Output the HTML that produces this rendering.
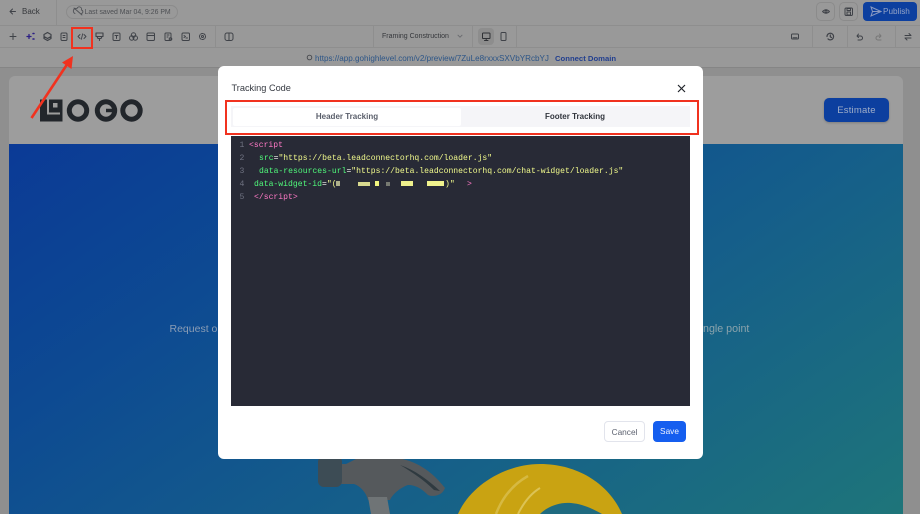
<!DOCTYPE html>
<html><head><meta charset="utf-8"><style>
html,body{margin:0;padding:0}
body{width:920px;height:514px;overflow:hidden;position:relative;background:#8f8f8f;font-family:"Liberation Sans",sans-serif}
.a{position:absolute}
.t{position:absolute;white-space:nowrap}
pre{position:absolute;margin:0;font:8.1px/13px "Liberation Mono",monospace;white-space:pre}
</style></head><body>
<!-- top bars -->
<div class="a" style="left:0;top:0;width:920px;height:25px;background:#999"></div>
<div class="a" style="left:0;top:25px;width:920px;height:1px;background:#8e8e8e"></div>
<div class="a" style="left:0;top:26px;width:920px;height:21px;background:#999"></div>
<div class="a" style="left:0;top:47px;width:920px;height:1px;background:#8e8e8e"></div>
<div class="a" style="left:0;top:48px;width:920px;height:20px;background:#999"></div>
<div class="a" style="left:0;top:67px;width:920px;height:1px;background:#858585"></div>
<div class="a" style="left:56px;top:0;width:1px;height:25px;background:#8e8e8e"></div>
<div class="a" style="left:215px;top:26px;width:1px;height:21px;background:#8e8e8e"></div>
<div class="a" style="left:373px;top:26px;width:1px;height:21px;background:#8e8e8e"></div>
<div class="a" style="left:472px;top:26px;width:1px;height:21px;background:#8e8e8e"></div>
<div class="a" style="left:516px;top:26px;width:1px;height:21px;background:#8e8e8e"></div>
<div class="a" style="left:812px;top:26px;width:1px;height:21px;background:#8e8e8e"></div>
<div class="a" style="left:847px;top:26px;width:1px;height:21px;background:#8e8e8e"></div>
<div class="a" style="left:895px;top:26px;width:1px;height:21px;background:#8e8e8e"></div>
<div class="a" style="left:478px;top:28px;width:16px;height:17px;background:#8d8d8d;border-radius:4px"></div>

<svg class="a" style="left:0;top:0" width="920" height="68" fill="none" stroke="#3f4248" stroke-width="1" stroke-linecap="round" stroke-linejoin="round">
<path d="M15.500 11.500h-5.500M12.500 9l-2.500 2.500 2.500 2.500"/>
<path d="M13 33.500v6M10 36.500h6"/>
<path d="M27 36.500h4M29 34.500v4" stroke="#2c1f85" stroke-width="1.300"/><path d="M33 33.500h1M33 39h1" stroke="#2c1f85" stroke-width="1.500"/>
<path d="M47.500 32.500l3.500 2v4l-3.500 2-3.500-2v-4zM44 36.500l3.500 2 3.500-2" stroke-width="1.200"/>
<rect x="61" y="33" width="6" height="7.500" rx="1.200"/><path d="M63 35.500h2M63 37.500h2"/>
<path d="M80 34.500l-2 2 2 2M84 34.500l2 2-2 2M82.700 33.800l-1.400 5.500" stroke-width=".9"/>
<path d="M96 33h7v3.500h-7zM97 36.500l1 2h3l1-2M99.500 38.500v2" stroke-width="1.100"/>
<rect x="113" y="33" width="7" height="7.500" rx="1.200"/><path d="M115 35.500h3M116.500 35.500v3"/>
<circle cx="133.500" cy="35" r="2.200"/><circle cx="131.700" cy="38" r="2.200"/><circle cx="135.300" cy="38" r="2.200"/>
<rect x="147" y="33" width="7.500" height="7.500" rx="1.200"/><path d="M147 35.500h7.500"/>
<rect x="165" y="33" width="6" height="7.500" rx="1"/><path d="M167 35h2M167 37h1"/><circle cx="170.500" cy="39" r="1.300"/>
<rect x="182" y="33" width="7.500" height="7.500" rx="1.200"/><path d="M184 35.500l1.500 1-1.500 1M186 38h1.500"/>
<circle cx="202.500" cy="36.500" r="3" stroke-dasharray="2 1"/><circle cx="202.500" cy="36.500" r="1"/>
<rect x="225" y="33" width="8" height="7.500" rx="2"/><path d="M229 33v7.500"/>
<path d="M458 35.200l2 2 2-2" stroke="#6a6c70"/>
<rect x="482.500" y="33" width="7.500" height="5.500" rx=".8" stroke="#2f3135"/><path d="M484.500 40.500h3.500M486.200 38.500v2" stroke="#2f3135"/>
<rect x="501" y="32.500" width="5" height="8" rx="1"/>
<rect x="791.500" y="34" width="7" height="5" rx="1"/><path d="M793 37.700h4" />
<path d="M827 36.500a3.300 3.300 0 1 1 1 2.400M830.300 35v1.800l1.200.7" stroke-width="1.200"/>
<path d="M857 36h3.500a2 2 0 0 1 0 4H858M858.500 34l-1.500 2 1.500 1.500"/>
<path d="M881 36h-3a2 2 0 0 0 0 4h3M879.500 34l1.500 2-1.500 1.500" stroke="#777"/>
<path d="M905 35.500h6M905 38h6M909 33.500l2 2M907 40l-2-2"/>
<path d="M74 8l8 7M75 13.500a2.500 2.500 0 0 1 2-5a2.300 2.300 0 0 1 4.500 1.500a1.800 1.800 0 0 1 0 3.500" stroke="#4f5156" stroke-width=".9"/>
<path d="M822.500 11.500q3.500-3.500 7 0q-3.500 3.500-7 0z" stroke-width=".9"/><circle cx="826" cy="11.500" r="1"/>
<rect x="845" y="8" width="7.500" height="7.500" rx="1.200"/><rect x="847" y="8.500" width="3.500" height="2"/><rect x="847" y="12" width="3.500" height="3"/>
<circle cx="309.500" cy="57.500" r="2.300" stroke="#45474c" stroke-width=".9"/>
</svg>
<div class="t" style="left:22px;top:6px;font-size:8px;line-height:11px;color:#36383c">Back</div>
<div class="a" style="left:66px;top:5px;width:110px;height:12px;border:1px solid #8b8b8b;border-radius:7px"></div>
<div class="t" style="left:84.500px;top:6.500px;font-size:6.900px;line-height:11px;color:#4e5054">Last saved Mar 04, 9:26 PM</div>

<!-- publish -->
<div class="a" style="left:815.500px;top:1.500px;width:19px;height:19px;border:1px solid #8b8b8b;border-radius:5px;box-sizing:border-box"></div>
<div class="a" style="left:839px;top:1.500px;width:19px;height:19px;border:1px solid #8b8b8b;border-radius:5px;box-sizing:border-box"></div>
<div class="a" style="left:863px;top:2px;width:54px;height:19px;background:#0c3f9f;border-radius:4px"></div>
<svg class="a" style="left:870px;top:6px" width="12" height="11" fill="none" stroke="#8a9ac2"><path d="M1 1l10 4.500L1 10l1.500-4.500zM2.500 5.500H11"/></svg>
<div class="t" style="left:883px;top:5.500px;font-size:8.200px;line-height:12px;color:#93a3c6">Publish</div>

<div class="t" style="left:382px;top:31px;font-size:7px;line-height:11px;color:#35373b">Framing Construction</div>

<!-- url -->
<div class="t" style="left:315px;top:52.500px;font-size:8.100px;line-height:11px;color:#2c5587">https://app.gohighlevel.com/v2/preview/7ZuLe8rxxxSXVbYRcbYJ</div>
<div class="t" style="left:555px;top:52.500px;font-size:7.700px;line-height:11px;font-weight:bold;color:#223f8f">Connect Domain</div>

<!-- page card -->
<div class="a" style="left:9px;top:76px;width:894px;height:70px;background:#9d9d9d;border-radius:6px 6px 0 0"></div>
<svg class="a" style="left:35px;top:92px" width="115" height="36" fill="none">
<rect x="5" y="7.500" width="22.500" height="22" fill="#22262b"/>
<rect x="12" y="7.500" width="13" height="15" fill="#9d9d9d"/>
<rect x="14" y="7.500" width="13.500" height="13" fill="#22262b"/>
<rect x="18" y="11" width="4.500" height="4.500" fill="#9d9d9d"/>
<g stroke="#22262b" stroke-width="5">
<circle cx="43" cy="18.500" r="8.700"/><circle cx="71" cy="18.500" r="8.700"/><circle cx="96.500" cy="18.500" r="8.700"/>
<path d="M71 18.500h9" stroke-width="3.500"/></g>
</svg>
<div class="a" style="left:824px;top:98px;width:65px;height:24px;background:#0c3f9f;border-radius:5px;box-shadow:0 1px 2px rgba(0,0,0,.2)"></div>
<div class="t" style="left:824px;top:99px;width:65px;text-align:center;font-size:9.500px;line-height:24px;letter-spacing:.2px;color:#a0aec9">Estimate</div>

<!-- hero -->
<div class="a" style="left:9px;top:144px;width:894px;height:370px;background:linear-gradient(145deg,#0b3a96 0%,#0d4a92 28%,#155e8a 60%,#1e757a 100%)"></div>
<div class="t" style="left:169.500px;top:322px;font-size:10.500px;line-height:14px;color:#8b9db5">Request o</div>
<div class="t" style="left:703px;top:322px;font-size:10.700px;line-height:14px;color:#8ba3ac">ngle point</div>

<!-- hammer & hat -->
<svg class="a" style="left:300px;top:450px" width="340" height="64">
<path d="M40 14h6l12-6h40c22 4 36 16 47 30l-1 2c-3 6-12 7-16 5-6-6-12-10-20-10-6 2-15 8-18 15H68c-2-8-8-14-14-16H40z" fill="#55595c"/>
<path d="M100 15c15 5 28 15 40 26l-6-1c-10-10-22-18-34-25z" fill="#2f3a40"/>
<rect x="18" y="6" width="24" height="31" rx="6" fill="#3d4c55"/>
<path d="M68 47h19l3 17H71z" fill="#6f7476"/>
<path d="M158 64C170 36 205 14 240 14c40 0 70 22 82 50z" fill="#c9a312"/>
<path d="M240 64c8-8 20-12 31-11 12 1 22 6 31 11z" fill="#1f6b80"/>
<path d="M196 64c5-13 14-28 32-38" fill="none" stroke="#d6b942" stroke-width="2.500"/>
<path d="M218 64c5-10 12-20 22-26" fill="none" stroke="#dcc355" stroke-width="2"/>
</svg>

<!-- modal -->
<div class="a" style="left:218px;top:66px;width:485px;height:393px;background:#fff;border-radius:6px"></div>
<div class="t" style="left:231.500px;top:82px;font-size:9.200px;line-height:13px;color:#363a42">Tracking Code</div>
<svg class="a" style="left:676px;top:83px" width="11" height="11" fill="none" stroke="#22252b" stroke-width="1.200"><path d="M2 2l7 7M9 2l-7 7"/></svg>

<div class="a" style="left:231px;top:106px;width:459px;height:21px;background:#f5f5f8"></div>
<div class="a" style="left:233px;top:107.500px;width:228px;height:18.500px;background:#fff;border-radius:2px"></div>
<div class="t" style="left:233px;top:107px;width:228px;text-align:center;font-size:8px;line-height:20px;font-weight:bold;color:#5a5f6b">Header Tracking</div>
<div class="t" style="left:461px;top:107px;width:228px;text-align:center;font-size:8px;line-height:20px;font-weight:bold;color:#30343c">Footer Tracking</div>
<div class="a" style="left:225px;top:99.500px;width:474px;height:35.500px;box-sizing:border-box;border:2.500px solid #f1321f"></div>

<!-- code -->
<div class="a" style="left:231px;top:136px;width:459px;height:270px;background:#282a36"></div>
<pre style="left:239.500px;top:138.500px;color:#6f7281">1
2
3
4
5</pre>
<pre style="left:249px;top:138.500px;color:#ff79c6">&lt;script</pre>
<pre style="left:259px;top:151.500px;color:#f1fa8c"><span style="color:#50fa7b">src</span><span style="color:#f8f8f2">=</span>"https://beta.leadconnectorhq.com/loader.js"</pre>
<pre style="left:259px;top:164.500px;color:#f1fa8c"><span style="color:#50fa7b">data-resources-url</span><span style="color:#f8f8f2">=</span>"https://beta.leadconnectorhq.com/chat-widget/loader.js"</pre>
<pre style="left:254px;top:177.500px;color:#f1fa8c"><span style="color:#50fa7b">data-widget-id</span><span style="color:#f8f8f2">=</span>"(</pre>
<div class="a" style="left:336px;top:181px;width:4px;height:5px;background:#aeb08a"></div>
<div class="a" style="left:358px;top:182px;width:12px;height:4px;background:#d8d98f"></div>
<div class="a" style="left:375px;top:181px;width:4px;height:5px;background:#f1f57f"></div>
<div class="a" style="left:386px;top:182px;width:4px;height:4px;background:#777a72"></div>
<div class="a" style="left:401px;top:181px;width:12px;height:5px;background:#eef08c"></div>
<div class="a" style="left:427px;top:181px;width:17px;height:5px;background:#f0f28d"></div>
<pre style="left:445px;top:177.500px;color:#f1fa8c">)"</pre>
<pre style="left:467px;top:177.500px;color:#ff79c6">&gt;</pre>
<pre style="left:254px;top:190.500px;color:#ff79c6">&lt;/script&gt;</pre>

<!-- buttons -->
<div class="a" style="left:604px;top:421px;width:41px;height:21px;box-sizing:border-box;border:1px solid #e2e4ec;border-radius:4px;background:#fff;text-align:center;font-size:8.300px;line-height:20px;color:#5d6270">Cancel</div>
<div class="a" style="left:653px;top:421px;width:33px;height:20.500px;border-radius:4px;background:#155eef;text-align:center;font-size:8.300px;line-height:21px;color:#f0f4ff">Save</div>

<!-- annotation -->
<div class="a" style="left:71px;top:27px;width:22px;height:22px;box-sizing:border-box;border:2.500px solid #f1321f"></div>
<svg class="a" style="left:0;top:0" width="120" height="130" fill="none">
<path d="M31.500 118L68 63" stroke="#f1321f" stroke-width="2.600"/>
<path d="M73 56l-1.500 13-9.500-6.500z" fill="#f1321f"/>
</svg>
</body></html>
